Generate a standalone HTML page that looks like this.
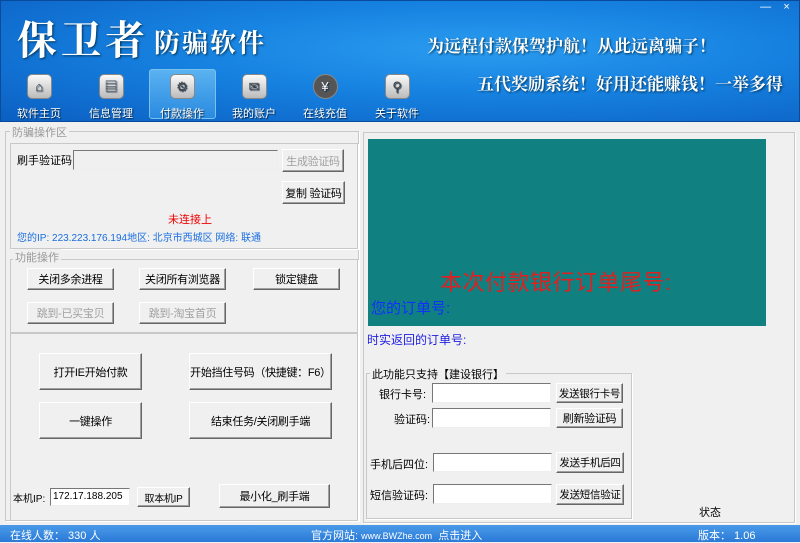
<!DOCTYPE html>
<html><head><meta charset="utf-8"><style>
*{margin:0;padding:0;box-sizing:border-box}
body{width:800px;height:542px;overflow:hidden;position:relative;font-family:"Liberation Sans","Noto Sans CJK SC",sans-serif;font-size:12px;background:#f0f0f0;color:#000}
.a{position:absolute}
#hdr{left:0;top:0;width:800px;height:122px;background:radial-gradient(ellipse at 60% 40%,#2a9cf0 0%,#1681e0 45%,#0b5fc2 100%);border:1px solid #0a4a9a}
.t1{color:#fff;font-family:"Noto Serif CJK SC",serif;font-weight:bold;text-shadow:1px 1px 2px #035;white-space:nowrap}
.nav{width:60px;text-align:center;color:#fff;font-size:11px;text-shadow:1px 1px 1px #024}
.ic{width:25px;height:25px;margin:0 auto 6px;border-radius:5px;background:linear-gradient(#fafafa,#bbb);border:1px solid #888;font-size:13px;line-height:23px;color:#444}
.btn{position:absolute;background:#f0f0f0;border:1px solid;border-color:#fff #666 #666 #fff;box-shadow:inset -1px -1px 0 #a0a0a0;text-align:center;font-size:11px;display:flex;align-items:center;justify-content:center;white-space:nowrap;letter-spacing:-0.3px}
.dis{color:#a0a0a0}
.inp{position:absolute;background:#fff;border:1px solid;border-color:#777 #eee #eee #777}
.grp{position:absolute;border:1px solid #c8c8c8;box-shadow:1px 1px 0 #fff}
.gt{position:absolute;background:#f0f0f0;font-size:11px;color:#999;padding:0 2px}
.lb{position:absolute;font-size:11px;white-space:nowrap}
</style></head><body>
<div id="hdr" class="a">
<div class="a t1" style="left:16px;top:8px;font-size:40px;letter-spacing:4px">保卫者</div>
<div class="a t1" style="left:153px;top:22px;font-size:26px;letter-spacing:2px">防骗软件</div>
<div class="a t1" style="left:426px;top:31px;font-size:17px">为远程付款保驾护航！从此远离骗子！</div>
<div class="a t1" style="left:476px;top:69px;font-size:17px">五代奖励系统！好用还能赚钱！一举多得</div>
<div class="a" style="left:748px;top:0;width:52px;height:14px;color:#fff;font-size:11px;text-align:center">&#8212;&nbsp;&nbsp;&nbsp;&nbsp;×</div>
<div class="a" style="left:148px;top:68px;width:67px;height:50px;border:1px solid #7cc0f0;border-radius:3px;background:linear-gradient(#5ab2f0,#2a8ae0)"></div>
<div class="a nav" style="left:8px;top:73px"><div class="ic">⌂</div>软件主页</div>
<div class="a nav" style="left:80px;top:73px"><div class="ic">▤</div>信息管理</div>
<div class="a nav" style="left:151px;top:73px"><div class="ic">⚙</div>付款操作</div>
<div class="a nav" style="left:223px;top:73px"><div class="ic">✉</div>我的账户</div>
<div class="a nav" style="left:294px;top:73px"><div class="ic" style="border-radius:13px;background:#555;color:#fff">¥</div>在线充值</div>
<div class="a nav" style="left:366px;top:73px"><div class="ic">⚲</div>关于软件</div>
</div>

<div class="grp" style="left:5px;top:131px;width:354px;height:390px"></div>
<div class="gt" style="left:10px;top:124px">防骗操作区</div>
<div class="grp" style="left:10px;top:143px;width:348px;height:106px"></div>
<div class="lb" style="left:17px;top:152px">刷手验证码</div>
<div class="inp" style="left:73px;top:150px;width:205px;height:20px;background:#f0f0f0"></div>
<div class="btn dis" style="left:282px;top:149px;width:62px;height:23px">生成验证码</div>
<div class="btn" style="left:282px;top:181px;width:63px;height:23px">复制 验证码</div>
<div class="lb" style="left:168px;top:211px;color:#e00">未连接上</div>
<div class="lb" style="left:17px;top:229px;color:#1a6ee0;font-size:10px">您的IP: 223.223.176.194地区: 北京市西城区 网络: 联通</div>
<div class="grp" style="left:10px;top:259px;width:348px;height:74px"></div>
<div class="gt" style="left:13px;top:249px">功能操作</div>
<div class="btn" style="left:27px;top:268px;width:87px;height:22px">关闭多余进程</div>
<div class="btn" style="left:139px;top:268px;width:87px;height:22px">关闭所有浏览器</div>
<div class="btn" style="left:253px;top:268px;width:87px;height:22px">锁定键盘</div>
<div class="btn dis" style="left:27px;top:302px;width:87px;height:22px">跳到-已买宝贝</div>
<div class="btn dis" style="left:139px;top:302px;width:87px;height:22px">跳到-淘宝首页</div>
<div class="grp" style="left:10px;top:333px;width:348px;height:188px"></div>
<div class="btn" style="left:39px;top:353px;width:103px;height:37px">打开IE开始付款</div>
<div class="btn" style="left:189px;top:353px;width:143px;height:37px">开始挡住号码（快捷键：F6）</div>
<div class="btn" style="left:39px;top:402px;width:103px;height:37px">一键操作</div>
<div class="btn" style="left:189px;top:402px;width:143px;height:37px">结束任务/关闭刷手端</div>
<div class="lb" style="left:13px;top:490px;font-size:10px">本机IP:</div>
<div class="inp" style="left:50px;top:488px;width:80px;height:18px;font-size:10px;padding:2px">172.17.188.205</div>
<div class="btn" style="left:137px;top:487px;width:53px;height:20px;font-size:10px">取本机IP</div>
<div class="btn" style="left:219px;top:484px;width:111px;height:24px">最小化_刷手端</div>

<div class="grp" style="left:363px;top:132px;width:432px;height:391px"></div>
<div class="a" style="left:368px;top:139px;width:398px;height:187px;background:#118080"></div>
<div class="a" style="left:440px;top:265px;color:#e02020;font-size:22px;white-space:nowrap;letter-spacing:0.5px">本次付款银行订单尾号:</div>
<div class="a" style="left:371px;top:297px;color:#1030ff;font-size:15px">您的订单号:</div>
<div class="a" style="left:367px;top:331px;color:#2020e0;font-size:12px">时实返回的订单号:</div>
<div class="grp" style="left:366px;top:373px;width:266px;height:146px"></div>
<div class="lb" style="left:370px;top:366px;background:#f0f0f0;padding:0 2px">此功能只支持【建设银行】</div>
<div class="lb" style="left:379px;top:386px">银行卡号:</div>
<div class="inp" style="left:432px;top:383px;width:119px;height:20px"></div>
<div class="btn" style="left:556px;top:383px;width:67px;height:20px;font-size:10.5px">发送银行卡号</div>
<div class="lb" style="left:394px;top:411px">验证码:</div>
<div class="inp" style="left:432px;top:408px;width:119px;height:20px"></div>
<div class="btn" style="left:556px;top:408px;width:67px;height:20px">刷新验证码</div>
<div class="lb" style="left:370px;top:456px">手机后四位:</div>
<div class="inp" style="left:433px;top:453px;width:119px;height:19px"></div>
<div class="btn" style="left:556px;top:452px;width:68px;height:21px;font-size:10.5px">发送手机后四</div>
<div class="lb" style="left:370px;top:487px">短信验证码:</div>
<div class="inp" style="left:433px;top:484px;width:119px;height:20px"></div>
<div class="btn" style="left:556px;top:484px;width:68px;height:21px;font-size:10.5px">发送短信验证</div>
<div class="lb" style="left:699px;top:504px">状态</div>

<div class="a" style="left:0;top:525px;width:800px;height:17px;background:linear-gradient(#4a9ae8,#2a7ad8);color:#fff;font-size:11px">
<span class="a" style="left:10px;top:2px">在线人数： 330 人</span>
<span class="a" style="left:311px;top:2px;white-space:nowrap">官方网站: <span style="font-size:9px">www.BWZhe.com</span> &nbsp;点击进入</span>
<span class="a" style="left:698px;top:2px">版本： 1.06</span>
</div>
</body></html>
